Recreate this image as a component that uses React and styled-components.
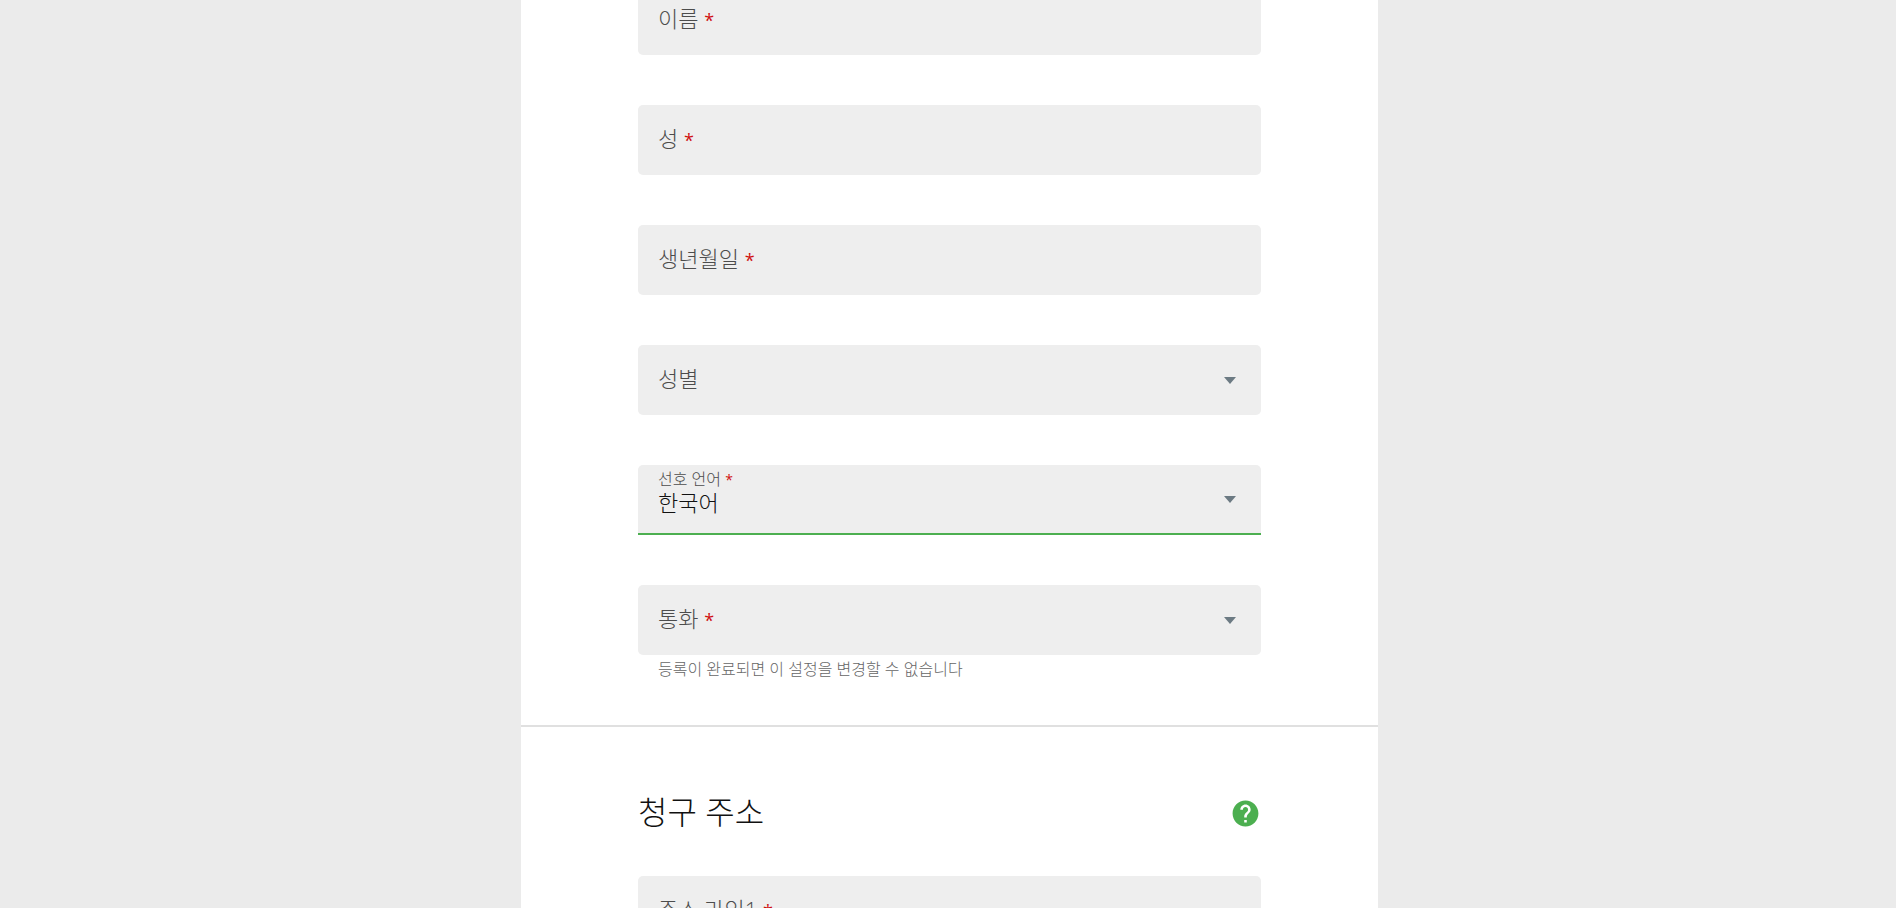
import React from 'react';
import styled, { createGlobalStyle, css } from 'styled-components';
import { MdHelp } from 'react-icons/md';

const colors = {
  page: '#ebebeb',
  panel: '#fff',
  field: '#eee',
  label: '#4c4c4c',
  text: '#111',
  hint: '#666',
  green: '#4caf50',
  required: '#d01010',
  arrow: '#6c7a83',
  divider: '#e0e0e0',
};

const GlobalStyle = createGlobalStyle`
  * {
    box-sizing: border-box;
  }

  body {
    margin: 0;
    background: ${colors.page};
    font-family: 'Open Sans', 'Noto Sans CJK KR', sans-serif;
    font-weight: 300;
  }
`;

const Page = styled.main`
  display: grid;
  grid-template-columns: 521fr 857fr 518fr;
  height: 100vh;
  overflow: hidden;
`;

const Panel = styled.form`
  grid-column: 2;
  background: ${colors.panel};
`;

const Section = styled.section`
  display: flex;
  flex-direction: column;
  gap: 50px;
  padding: 0 117px;
`;

const PersonalSection = styled(Section)`
  margin-top: -15px;
  padding-bottom: 44px;
  border-bottom: 2px solid ${colors.divider};
`;

const FieldGroup = styled.div`
  display: flex;
  flex-direction: column;
`;

const FieldBox = styled.div`
  position: relative;
  display: flex;
  align-items: center;
  height: 70px;
  background: ${colors.field};
  border-radius: 5px;

  ${({ $active }) =>
    $active &&
    css`
      border-bottom: 2px solid ${colors.green};
      border-radius: 5px 5px 0 0;
    `}
`;

const controlStyle = css`
  width: 100%;
  height: 100%;
  padding: 6px 20px 0;
  border: 0;
  outline: 0;
  background: transparent;
  color: ${colors.text};
  font: inherit;
  font-size: 22px;
`;

const Input = styled.input`
  ${controlStyle}
`;

const Select = styled.select`
  ${controlStyle}
  appearance: none;
`;

const Required = styled.span`
  color: ${colors.required};
  font-weight: 400;
  line-height: 0;
`;

const Label = styled.label`
  position: absolute;
  left: 20px;
  top: ${({ $raised }) => ($raised ? '4px' : '17px')};
  color: ${colors.label};
  font-size: ${({ $raised }) => ($raised ? '16px' : '22px')};
  line-height: ${({ $raised }) => ($raised ? '20px' : '32px')};
  pointer-events: none;

  ${Required} {
    font-size: ${({ $raised }) => ($raised ? '14px' : '18px')};
  }
`;

const Arrow = styled.svg`
  position: absolute;
  right: 25px;
  width: 12px;
  height: 7px;
  fill: ${colors.arrow};
  pointer-events: none;
`;

const Hint = styled.p`
  margin: 2px 0 0;
  padding-left: 20px;
  color: ${colors.hint};
  font-size: 16px;
  line-height: 24px;
`;

const SectionHeader = styled.header`
  display: flex;
  align-items: center;
  justify-content: space-between;
  padding-top: 62px;
`;

const Title = styled.h2`
  margin: 0;
  padding-bottom: 2px;
  color: ${colors.text};
  font-size: 32px;
  font-weight: 300;
  line-height: 46px;
`;

const HelpButton = styled.button`
  display: flex;
  padding: 0;
  border: 0;
  background: none;
  color: ${colors.green};
  font-size: 31px;
  cursor: pointer;
`;

const AddressSection = styled(Section)`
  gap: 39px;
`;

const Field = ({ id, label, required, options, value, hint }) => (
  <FieldGroup>
    <FieldBox $active={Boolean(value)}>
      {options ? (
        <>
          <Select id={id} defaultValue={value || ''} required={required}>
            {!value && <option value='' />}
            {options.map((option) => (
              <option key={option}>{option}</option>
            ))}
          </Select>
          <Arrow viewBox='0 0 12 7' aria-hidden='true'>
            <path d='M0 0h12L6 7z' />
          </Arrow>
        </>
      ) : (
        <Input id={id} type='text' required={required} />
      )}
      <Label htmlFor={id} $raised={Boolean(value)}>
        {label} {required && <Required>*</Required>}
      </Label>
    </FieldBox>
    {hint && <Hint>{hint}</Hint>}
  </FieldGroup>
);

const App = () => (
  <>
    <GlobalStyle />
    <Page>
      <Panel>
        <PersonalSection>
          <Field id='firstName' label='이름' required />
          <Field id='lastName' label='성' required />
          <Field id='birthDate' label='생년월일' required />
          <Field id='gender' label='성별' options={[]} />
          <Field
            id='language'
            label='선호 언어'
            required
            options={['한국어']}
            value='한국어'
          />
          <Field
            id='currency'
            label='통화'
            required
            options={[]}
            hint='등록이 완료되면 이 설정을 변경할 수 없습니다'
          />
        </PersonalSection>
        <AddressSection>
          <SectionHeader>
            <Title>청구 주소</Title>
            <HelpButton type='button' aria-label='청구 주소'>
              <MdHelp />
            </HelpButton>
          </SectionHeader>
          <Field id='address1' label='주소 라인1' required />
        </AddressSection>
      </Panel>
    </Page>
  </>
);

export default App;
